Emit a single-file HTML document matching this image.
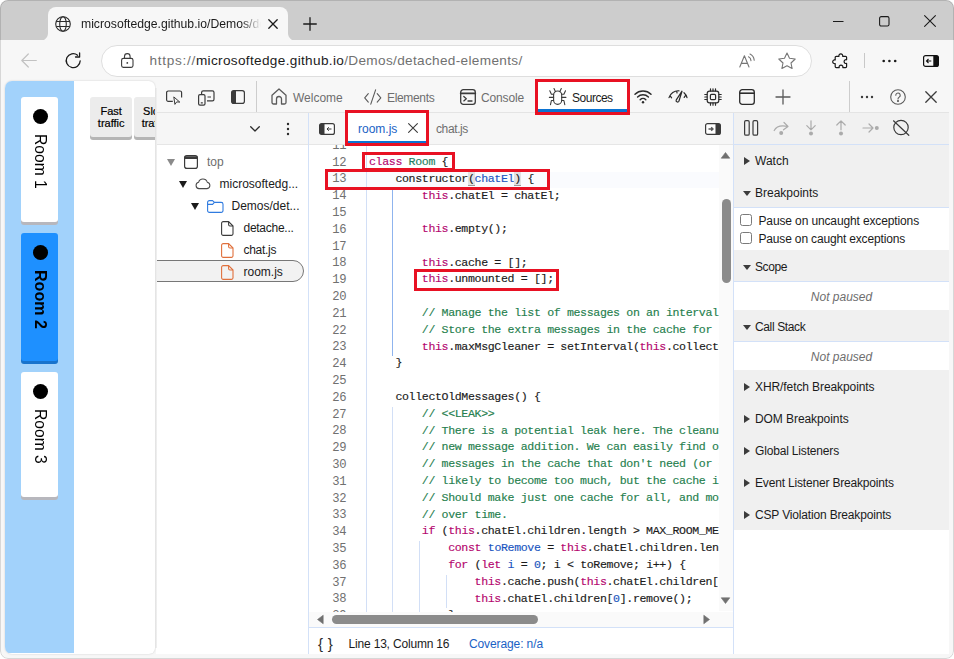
<!DOCTYPE html>
<html lang="en">
<head>
<meta charset="utf-8">
<title>microsoftedge.github.io/Demos/detached-elements/</title>
<style>
*{box-sizing:border-box;margin:0;padding:0}
html,body{width:954px;height:659px;overflow:hidden;background:#fff}
body{position:relative;font-family:"Liberation Sans",sans-serif;font-size:12px;color:#1b1b1b}
.abs,.abs-all *{position:absolute}
#win{position:absolute;left:0;top:0;width:954px;height:659px;background:#f7f7f7;border-radius:8px 8px 8px 8px;overflow:hidden}
#titlebar{position:absolute;left:0;top:0;width:954px;height:41px;background:#cdcdcd}
#tab{position:absolute;left:48px;top:7px;width:240px;height:34px;background:#f7f7f7;border-radius:8px 8px 0 0}
#tab:before,#tab:after{content:"";position:absolute;bottom:0;width:8px;height:8px}
#tab:before{left:-8px;background:radial-gradient(circle at 0 0,rgba(0,0,0,0) 7.5px,#f7f7f7 8.5px)}
#tab:after{right:-8px;background:radial-gradient(circle at 100% 0,rgba(0,0,0,0) 7.5px,#f7f7f7 8.5px)}
.t{position:absolute;white-space:nowrap;line-height:1}
svg{position:absolute;overflow:visible}
#toolbar{position:absolute;left:0;top:40px;width:954px;height:41px;background:#f7f7f7}
#pill{position:absolute;left:101px;top:44.500px;width:711px;height:32.500px;border-radius:16px;background:#fff;border:1px solid #dedede}
#page{position:absolute;left:5px;top:81px;width:150px;height:573px;background:#fff;border-radius:7px 6px 6px 7px;overflow:hidden;box-shadow:0 0 2px rgba(0,0,0,.18)}
#rooms{position:absolute;left:0;top:0;width:69px;height:572px;background:#a2d2fb}
.room{position:absolute;left:16px;width:37px;background:#fff;border-radius:3px;box-shadow:0 3px 0 #b7b7bd}
.room .dot{position:absolute;left:11.5px;top:12px;width:15px;height:15px;border-radius:50%;background:#000}
.room .lbl{position:absolute;left:7px;top:37px;writing-mode:vertical-rl;font-size:17px;line-height:25px;white-space:nowrap;color:#000;transform:scaleY(.918);transform-origin:50% 0}
.btn{-webkit-text-stroke:.2px;position:absolute;top:16px;width:42.4px;height:40px;background:#ececec;border-radius:3px;box-shadow:0 3px 0 #b5b5b5;font-size:11px;line-height:12px;text-align:center;padding-top:8px;color:#000}

#dt{position:absolute;left:156px;top:81px;width:793px;height:573px;background:#fff}
.row1{position:absolute;left:156px;top:81px;width:793px;height:32px;background:#f7f7f7;border-bottom:1px solid #e4e4e4}
.row2{position:absolute;left:156px;top:113px;width:793px;height:32px;background:#f6f6f6;border-bottom:1px solid #e6e6e6}
.vline{position:absolute;width:1px;background:#d3e1f8}
.ui{font-size:12px;color:#1b1b1b}
.grey{color:#6e6e6e}
.redbox{position:absolute;border:3px solid #e81123}
.hdr{position:absolute;left:734px;width:215px;height:32px;background:#f0f0f0}
.hdr .t{left:21px;top:10px;font-size:12px}
.hdr i{position:absolute;width:0;height:0;border-style:solid}
.hdr i.r{left:10px;top:12px;border-width:4px 0 4px 6.5px;border-color:transparent transparent transparent #3c3c3c}
.hdr i.d{left:8.5px;top:13.5px;border-width:5.5px 4px 0 4px;border-color:#3c3c3c transparent transparent transparent}
.lo i{margin-top:1px}
.hl{position:absolute;left:734px;width:215px;height:1px;background:#d3e1f8}
.cb{position:absolute;left:740px;width:12px;height:12px;border:1px solid #7a7a7a;border-radius:2.5px;background:#fff}
.np{position:absolute;left:734px;width:215px;text-align:center;font-style:italic;color:#6e6e6e;font-size:12px;line-height:1;white-space:nowrap}
.tri{position:absolute;width:0;height:0;border-style:solid;border-width:7px 4.5px 0 4.5px;border-color:#1b1b1b transparent transparent transparent}
#code{position:absolute;left:309px;top:145px;width:410px;height:467px;overflow:hidden;background:#fff}
#code pre{-webkit-text-stroke:.15px;position:absolute;left:60px;top:-7.9px;font-family:"Liberation Mono",monospace;font-size:11.6px;letter-spacing:-.36px;line-height:16.8px;color:#1b1b1b;white-space:pre}
#code .ln{position:absolute;left:0;top:-7.2px;width:37px;text-align:right;font-family:"Liberation Mono",monospace;font-size:12.2px;letter-spacing:-.5px;line-height:16.8px;color:#707070;white-space:pre}
.k{color:#b4056e}.ty{color:#1f7f62}.d{color:#1a55c0}.c{color:#26804e}.n{color:#1a55c0}
.bm{background:#e2e2e2;box-shadow:0 1px 0 #9a9a9a}
.g{position:absolute;width:1px;background:#d2dff6}
</style>
</head>
<body>
<div id="win">
  <div id="titlebar"></div>
  <div id="tab"></div>
  <div class="t" style="left:81px;top:18px;font-size:12.2px;color:#1b1b1b;width:180px;height:14px;overflow:hidden;-webkit-mask-image:linear-gradient(90deg,#000 160px,transparent 180px);mask-image:linear-gradient(90deg,#000 160px,transparent 180px)">microsoftedge.github.io/Demos/detached-elements/</div>
  <div id="toolbar"></div>
  <div id="pill"></div>
  <div class="t" style="left:149.500px;top:54px;font-size:13.600px;letter-spacing:.335px;color:#717171"><span style="letter-spacing:.7px">https://</span><span style="color:#1b1b1b">microsoftedge.github.io</span>/Demos/detached-elements/</div>

<!-- browser chrome icons -->
<svg style="left:55px;top:16px" width="16" height="16" viewBox="0 0 16 16" fill="none" stroke="#2b2b2b" stroke-width="1.100"><circle cx="8" cy="8" r="7.300"/><ellipse cx="8" cy="8" rx="3.300" ry="7.300"/><path d="M1.300 5.500H14.700M1.300 10.500H14.700"/></svg>
<svg style="left:268px;top:19px" width="10" height="10" viewBox="0 0 10 10" fill="none" stroke="#1b1b1b" stroke-width="1.300" stroke-linecap="round"><path d="M.8 .8L9.200 9.200M9.200 .8L.8 9.200"/></svg>
<svg style="left:303px;top:17px" width="14" height="14" viewBox="0 0 14 14" fill="none" stroke="#1b1b1b" stroke-width="1.300" stroke-linecap="round"><path d="M7 .7V13.300M.7 7H13.300"/></svg>
<svg style="left:833px;top:20.500px" width="11" height="2" viewBox="0 0 11 2" fill="none" stroke="#1b1b1b" stroke-width="1.100"><path d="M0 .5H10.500"/></svg>
<svg style="left:879px;top:16px" width="11" height="11" viewBox="0 0 11 11" fill="none" stroke="#1b1b1b" stroke-width="1.100"><rect x=".6" y=".6" width="9.400" height="9.400" rx="1.600"/></svg>
<svg style="left:924px;top:15px" width="12" height="12" viewBox="0 0 12 12" fill="none" stroke="#1b1b1b" stroke-width="1.100" stroke-linecap="round"><path d="M.6 .6L11.400 11.400M11.400 .6L.6 11.400"/></svg>
<svg style="left:21px;top:53px" width="16" height="15" viewBox="0 0 16 15" fill="none" stroke="#c2c2c2" stroke-width="1.200" stroke-linecap="round" stroke-linejoin="round"><path d="M15.300 7.500H1M7.300 1L.8 7.500 7.300 14"/></svg>
<svg style="left:65px;top:52px" width="17" height="17" viewBox="0 0 17 17" fill="none" stroke="#1b1b1b" stroke-width="1.300" stroke-linecap="round" stroke-linejoin="round"><path d="M15.200 8.800A7 7 0 1 1 12.600 3.200"/><path d="M14.600 .9V5H10.500" /></svg>
<svg style="left:121px;top:53px" width="13" height="15" viewBox="0 0 13 15" fill="none" stroke="#3b3b3b" stroke-width="1.100"><rect x=".6" y="5.400" width="11.400" height="9" rx="1.800"/><path d="M3.500 5.400V3.400A2.800 2.800 0 0 1 9.100 3.400V5.400"/><circle cx="6.300" cy="9.900" r=".9" fill="#3b3b3b" stroke="none"/></svg>
<svg style="left:739px;top:53px" width="18" height="15" viewBox="0 0 18 15" fill="none" stroke="#767676" stroke-width="1.100" stroke-linecap="round" stroke-linejoin="round"><path d="M.8 14L5.400 2.800 10 14M2.300 10.400H8.500"/><path d="M9.500 3.800A4.500 4.500 0 0 1 12 7.600M11 1A7.600 7.600 0 0 1 15.200 7.200"/></svg>
<svg style="left:778px;top:52px" width="18" height="17" viewBox="0 0 18 17" fill="none" stroke="#767676" stroke-width="1.100" stroke-linejoin="round"><path d="M9 1L11.500 6.200 17.200 7 13 11 14.100 16.500 9 13.800 3.900 16.500 5 11 .8 7 6.500 6.200z"/></svg>
<svg style="left:833px;top:53px" width="16" height="16" viewBox="0 0 16 16" fill="none" stroke="#1b1b1b" stroke-width="1.200" stroke-linejoin="round"><path d="M6 3.300A1.900 1.900 0 1 1 9.600 3.300H12.600A1 1 0 0 1 13.600 4.300V6.800A1.900 1.900 0 1 0 13.600 10.400V13.600A1 1 0 0 1 12.600 14.600H9.800A1.900 1.900 0 1 0 6.200 14.600H3.200A1 1 0 0 1 2.200 13.600V10.600A1.900 1.900 0 1 1 2.200 7V4.300A1 1 0 0 1 3.200 3.300z"/></svg>
<div class="vline" style="left:864px;top:53px;height:15px;background:#c8c8c8"></div>
<svg style="left:882px;top:59px" width="15" height="4" viewBox="0 0 15 4" fill="#1b1b1b"><circle cx="1.700" cy="2" r="1.300"/><circle cx="7.400" cy="2" r="1.300"/><circle cx="13.200" cy="2" r="1.300"/></svg>
<svg style="left:923px;top:55px" width="16" height="12" viewBox="0 0 16 12"><rect x=".6" y=".6" width="14.800" height="10.800" rx="2" fill="none" stroke="#111" stroke-width="1.200"/><path d="M10.300 .6H13.400A2 2 0 0 1 15.400 2.600V9.400A2 2 0 0 1 13.400 11.400H10.300z" fill="#111"/><path d="M8.300 6H3.500M5.500 4L3.500 6l2 2" fill="none" stroke="#111" stroke-width="1.100"/></svg>

  <div id="page">
    <div id="rooms">
      <div class="room" style="top:16px;height:125px"><div class="dot"></div><div class="lbl">Room 1</div></div>
      <div class="room" style="top:152px;height:127.5px;background:#1e90ff;box-shadow:0 3px 0 #1873cc"><div class="dot"></div><div class="lbl" style="font-weight:bold;transform:scaleY(.945)">Room 2</div></div>
      <div class="room" style="top:291px;height:125px"><div class="dot"></div><div class="lbl">Room 3</div></div>
    </div>
    <div class="btn" style="left:85px">Fast<br>traffic</div>
    <div class="btn" style="left:128.800px">Slow<br>traffic</div>
  </div>

  <div id="dt"></div>
  <div class="row1"></div>
  <div class="row2"></div>

<!-- devtools main toolbar -->
<svg style="left:166px;top:90.400px" width="17" height="16" viewBox="0 0 17 16" fill="none" stroke="#3b3b3b" stroke-width="1.200" stroke-linejoin="round"><path d="M6.800 11.400H2.200A1.600 1.600 0 0 1 .6 9.800V2.600A1.600 1.600 0 0 1 2.200 1H14A1.600 1.600 0 0 1 15.600 2.600V7.600"/><path d="M7.800 6.900L8.900 14.400 10.700 11.900 13.800 12.100z" stroke-width="1"/></svg>
<svg style="left:198px;top:89.600px" width="17" height="16" viewBox="0 0 17 16" fill="none" stroke="#3b3b3b" stroke-width="1.2"><path d="M3.600 4V2.400A1.600 1.600 0 0 1 5.200 .8H14.400A1.600 1.600 0 0 1 16 2.400V9.200A1.600 1.600 0 0 1 14.400 10.800H9"/><rect x=".6" y="4.600" width="6.400" height="10.600" rx="1.400"/><path d="M2.800 12.800H4.800M9.500 7H13"/></svg>
<svg style="left:231px;top:90px" width="14" height="14" viewBox="0 0 14 14"><rect x=".6" y=".6" width="12.800" height="12.800" rx="2.200" fill="none" stroke="#3b3b3b" stroke-width="1.200"/><path d="M2.800 .6H5V13.400H2.800A2.200 2.200 0 0 1 .6 11.200V2.800A2.200 2.200 0 0 1 2.800 .6z" fill="#3b3b3b"/></svg>
<div class="vline" style="left:256px;top:81px;height:31px;background:#cdcdcd"></div>
<svg style="left:271px;top:88px" width="16" height="17" viewBox="0 0 16 17" fill="none" stroke="#5a5a5a" stroke-width="1.3" stroke-linejoin="round"><path d="M1 7.200L8 1l7 6.200V14.500a1.500 1.500 0 0 1-1.500 1.500H10.500V11a2.500 2.500 0 0 0-5 0v5H2.500A1.500 1.500 0 0 1 1 14.500z"/></svg>
<div class="t ui grey" style="left:293px;top:92px">Welcome</div>
<svg style="left:364px;top:89px" width="18" height="16" viewBox="0 0 18 16" fill="none" stroke="#5a5a5a" stroke-width="1.100" stroke-linecap="round" stroke-linejoin="round"><path d="M4.300 4.700L.7 8.900 4.300 13.100M13.200 4.700L16.800 8.900 13.200 13.100M11.600 .8L6.800 15.200"/></svg>
<div class="t ui grey" style="letter-spacing:-0.337px;left:387px;top:92px">Elements</div>
<svg style="left:460px;top:89px" width="16" height="16" viewBox="0 0 16 16" fill="none" stroke="#3b3b3b" stroke-width="1.300" stroke-linecap="round" stroke-linejoin="round"><rect x=".7" y=".7" width="14.600" height="14.600" rx="2.600"/><path d="M.7 4.300H15.300" stroke-width="1.8"/><path d="M3.800 7.500L6.300 9.700 3.800 11.900M8 12h4"/></svg>
<div class="t ui grey" style="letter-spacing:-0.157px;left:481px;top:92px">Console</div>
<div style="position:absolute;left:537px;top:81px;width:91px;height:31px;background:#fff"></div>
<svg style="left:549px;top:88px" width="18" height="17" viewBox="0 0 18 17" fill="none" stroke="#3b3b3b" stroke-width="1.100" stroke-linecap="round" stroke-linejoin="round"><path d="M4.600 7a4.050 4.050 0 0 1 8.100 0V12.300a4.050 4.050 0 0 1-8.100 0z"/><path d="M6.400 3.600L5 .6M10.900 3.600L12.300 .6M4.600 6.300H2.400L.8 2.800M12.700 6.300H14.900L16.500 2.800M4.600 9.400H.4M12.700 9.400H16.900M4.600 12.500H2.400L1.500 16.600M12.700 12.500H14.900L15.800 16.600"/></svg>
<div class="t ui" style="letter-spacing:-0.486px;left:572px;top:92px;color:#1b1b1b">Sources</div>
<div style="position:absolute;left:537px;top:109.200px;width:91px;height:2.800px;background:#0b73d2"></div>
<svg style="left:634px;top:89px" width="18" height="15" viewBox="0 0 18 15" fill="none" stroke="#2b2b2b" stroke-width="1.500" stroke-linecap="round"><path d="M1 5.200a11.500 11.500 0 0 1 16 0M3.600 8a7.800 7.800 0 0 1 10.800 0M6.200 10.700a4 4 0 0 1 5.600 0"/><circle cx="9" cy="13.200" r="1.200" fill="#2b2b2b" stroke="none"/></svg>
<svg style="left:668px;top:90px" width="20" height="13" viewBox="0 0 20 13" fill="none" stroke="#2b2b2b" stroke-width="1.200" stroke-linecap="round" stroke-linejoin="round"><path d="M1 7.600A9.500 9.500 0 0 1 11 .8M16 2.700A9.500 9.500 0 0 1 19 7.600M2 5.600L3.600 7.800M17.600 5.200L16.200 7.400M8.800 1L9 3"/><path d="M14 1.200L8.300 9.800A1.500 1.500 0 0 0 10.900 11.300z"/></svg>
<svg style="left:704px;top:88px" width="18" height="18" viewBox="0 0 18 18" fill="none" stroke="#2b2b2b" stroke-width="1.200" stroke-linecap="round"><rect x="3.200" y="3.200" width="11.600" height="11.600" rx="2.400"/><rect x="6.400" y="6.400" width="5.200" height="5.200" rx="1.200"/><path d="M6.500 3V.8M9 3V.8M11.500 3V.8M6.500 17.200V15M9 17.200V15M11.500 17.200V15M3 6.500H.8M3 9H.8M3 11.500H.8M17.200 6.500H15M17.200 9H15M17.200 11.500H15"/></svg>
<svg style="left:739px;top:89px" width="16" height="16" viewBox="0 0 16 16" fill="none" stroke="#2b2b2b" stroke-width="1.300"><rect x=".7" y=".7" width="14.600" height="14.600" rx="2.600"/><path d="M.7 4.200H15.300" stroke-width="1.600"/></svg>
<svg style="left:775px;top:89px" width="16" height="16" viewBox="0 0 16 16" fill="none" stroke="#5a5a5a" stroke-width="1.300" stroke-linecap="round"><path d="M8 1v14M1 8h14"/></svg>
<div class="vline" style="left:849px;top:81px;height:31px;background:#cdcdcd"></div>
<svg style="left:860px;top:95px" width="14" height="4" viewBox="0 0 14 4" fill="#3b3b3b"><circle cx="2" cy="2" r="1.200"/><circle cx="7" cy="2" r="1.200"/><circle cx="12" cy="2" r="1.200"/></svg>
<svg style="left:890px;top:89px" width="16" height="16" viewBox="0 0 16 16" fill="none" stroke="#5a5a5a" stroke-width="1.100" stroke-linecap="round"><circle cx="8" cy="8" r="7.300"/><path d="M5.800 6.300a2.200 2.200 0 1 1 3.400 1.800c-.8.500-1.200 1-1.200 1.900"/><circle cx="8" cy="12" r=".5" fill="#5a5a5a"/></svg>
<svg style="left:925px;top:91px" width="12" height="12" viewBox="0 0 12 12" fill="none" stroke="#3b3b3b" stroke-width="1.300" stroke-linecap="round"><path d="M.8 .8L11.200 11.200M11.200 .8L.8 11.200"/></svg>


<!-- second row -->
<svg style="left:250px;top:125.700px" width="10" height="6" viewBox="0 0 10 6" fill="none" stroke="#2b2b2b" stroke-width="1.300" stroke-linecap="round" stroke-linejoin="round"><path d="M.7 .7L5 5l4.300-4.300"/></svg>
<svg style="left:286px;top:122px" width="4" height="14" viewBox="0 0 4 14" fill="#2b2b2b"><circle cx="2" cy="2" r="1.200"/><circle cx="2" cy="7" r="1.200"/><circle cx="2" cy="12" r="1.200"/></svg>
<div class="vline" style="left:308px;top:113px;height:541px"></div>
<svg style="left:319px;top:123px" width="16" height="12" viewBox="0 0 16 12"><rect x=".6" y=".6" width="14.800" height="10.800" rx="2" fill="#fff" stroke="#3b3b3b" stroke-width="1.200"/><path d="M2.600 .6H5.500V11.400H2.600A2 2 0 0 1 .6 9.400V2.600A2 2 0 0 1 2.600 .6z" fill="#3b3b3b"/><path d="M12.500 6H8M9.800 4.200L8 6l1.800 1.800" fill="none" stroke="#3b3b3b" stroke-width="1"/></svg>
<div class="abs" style="position:absolute;left:348px;top:113px;width:80px;height:31px;background:#fff"></div>
<div class="t ui" style="left:358px;top:123px;color:#1a62c5">room.js</div>
<svg style="left:408px;top:123px" width="10" height="10" viewBox="0 0 10 10" fill="none" stroke="#3b3b3b" stroke-width="1.100" stroke-linecap="round"><path d="M.6 .6L9.400 9.400M9.400 .6L.6 9.400"/></svg>
<div style="position:absolute;left:348px;top:141px;width:80px;height:2px;background:#0b73d2"></div>
<div class="t ui grey" style="letter-spacing:-0.386px;left:436px;top:123px">chat.js</div>
<svg style="left:705px;top:123px" width="16" height="12" viewBox="0 0 16 12"><rect x=".6" y=".6" width="14.800" height="10.800" rx="2" fill="#fff" stroke="#3b3b3b" stroke-width="1.200"/><path d="M13.400 .6H10.500V11.400H13.400A2 2 0 0 0 15.400 9.400V2.600A2 2 0 0 0 13.400 .6z" fill="#3b3b3b"/><path d="M3.500 6H8M6.200 4.200L8 6 6.200 7.800" fill="none" stroke="#5a5a5a" stroke-width="1.400"/></svg>
<div class="vline" style="left:733px;top:113px;height:541px"></div>
<!-- debugger toolbar -->
<div style="position:absolute;left:734px;top:113px;width:215px;height:31px;background:#f1f1f1"></div>
<svg style="left:744px;top:120px" width="15" height="16" viewBox="0 0 15 16" fill="none" stroke="#3b3b3b" stroke-width="1.200"><rect x=".6" y=".6" width="4.600" height="14.600" rx="1.300"/><rect x="9" y=".6" width="4.600" height="14.600" rx="1.300"/></svg>
<svg style="left:773px;top:120px" width="17" height="16" viewBox="0 0 17 16" fill="none" stroke="#ababab" stroke-width="1.200" stroke-linecap="round" stroke-linejoin="round"><path d="M1.200 10.500C3 6.800 8 5 14.500 6.300M11 2.500L15 6.400 10.500 9.800"/><circle cx="8.200" cy="13" r="2" fill="#ababab" stroke="none"/></svg>
<svg style="left:805px;top:120px" width="12" height="16" viewBox="0 0 12 16" fill="none" stroke="#ababab" stroke-width="1.200" stroke-linecap="round" stroke-linejoin="round"><path d="M6 .8V9.800M1.800 5.600L6 9.800l4.200-4.200"/><circle cx="6" cy="13.500" r="2" fill="#ababab" stroke="none"/></svg>
<svg style="left:835px;top:120px" width="12" height="16" viewBox="0 0 12 16" fill="none" stroke="#ababab" stroke-width="1.200" stroke-linecap="round" stroke-linejoin="round"><path d="M6 9.800V.8M1.800 5L6 .8l4.200 4.200"/><circle cx="6" cy="13.500" r="2" fill="#ababab" stroke="none"/></svg>
<svg style="left:862px;top:123px" width="17" height="10" viewBox="0 0 17 10" fill="none" stroke="#ababab" stroke-width="1.200" stroke-linecap="round" stroke-linejoin="round"><path d="M1 5H11M7 1L11 5 7 9"/><circle cx="14.800" cy="5" r="2" fill="#ababab" stroke="none"/></svg>
<svg style="left:892px;top:119px" width="18" height="18" viewBox="0 0 18 18" fill="none" stroke="#3b3b3b" stroke-width="1.200" stroke-linecap="round"><circle cx="9" cy="8.500" r="7.200"/><path d="M1.500 1.800L16.800 16.300"/></svg>
<!-- navigator tree -->
<div style="position:absolute;left:155px;top:88px;width:2px;height:560px;background:linear-gradient(90deg,#e0e0e0,#f2f2f2)"></div>
<div style="position:absolute;left:157px;top:255px;width:151px;height:32px;overflow:hidden"><div style="position:absolute;left:-7px;top:5px;width:154px;height:22px;background:#f2f2f2;border:1px solid #777;border-radius:0 11px 11px 0"></div></div>
<div class="tri" style="left:167px;top:159px;border-top-color:#8a8a8a"></div>
<svg style="left:184px;top:155px" width="14" height="14" viewBox="0 0 14 14" fill="none" stroke="#3b3b3b" stroke-width="1.200"><rect x=".6" y=".6" width="12.800" height="12.800" rx="2.200"/><path d="M.6 2.600H13.400" stroke-width="2.800"/></svg>
<div class="t ui grey" style="left:207px;top:156px">top</div>
<div class="tri" style="left:179px;top:181px"></div>
<svg style="left:195px;top:177.500px" width="16" height="11.300" viewBox="0 0 17 12" fill="none" stroke="#4a4a4a" stroke-width="1.100" stroke-linejoin="round"><path d="M4.200 11.300A3.400 3.400 0 0 1 3.800 4.600 4.800 4.800 0 0 1 13 4.400 3.500 3.500 0 0 1 12.800 11.300z"/></svg>
<div class="t ui" style="left:219.500px;top:178px">microsoftedg...</div>
<div class="tri" style="left:191px;top:203px"></div>
<svg style="left:207px;top:200px" width="17" height="13" viewBox="0 0 17 13" fill="none" stroke="#2f7be0" stroke-width="1.100" stroke-linejoin="round"><path d="M.6 2.400A1.800 1.800 0 0 1 2.400 .6H5.600L7.400 2.400H14.200A1.800 1.800 0 0 1 16 4.200V10.600A1.800 1.800 0 0 1 14.200 12.400H2.400A1.800 1.800 0 0 1 .6 10.600z"/><path d="M.6 4.400H5.600L7.400 2.400"/></svg>
<div class="t ui" style="left:231.500px;top:200px">Demos/det...</div>
<svg style="left:221px;top:221px" width="13" height="15" viewBox="0 0 13 15" fill="none" stroke="#3b3b3b" stroke-width="1.100" stroke-linejoin="round"><path d="M2.200 .6H7.600L12 5V12.800A1.600 1.600 0 0 1 10.400 14.400H2.200A1.600 1.600 0 0 1 .6 12.800V2.200A1.600 1.600 0 0 1 2.200 .6z"/><path d="M7.600 .6V3.600A1.400 1.400 0 0 0 9 5H12"/></svg>
<div class="t ui" style="letter-spacing:-0.270px;left:243.500px;top:222px">detache...</div>
<svg style="left:221px;top:243px" width="13" height="15" viewBox="0 0 13 15" fill="none" stroke="#e0703c" stroke-width="1.100" stroke-linejoin="round"><path d="M2.200 .6H7.600L12 5V12.800A1.600 1.600 0 0 1 10.400 14.400H2.200A1.600 1.600 0 0 1 .6 12.800V2.200A1.600 1.600 0 0 1 2.200 .6z"/><path d="M7.600 .6V3.600A1.400 1.400 0 0 0 9 5H12"/></svg>
<div class="t ui" style="left:243.500px;top:244px;letter-spacing:-.3px">chat.js</div>
<svg style="left:221px;top:265px" width="13" height="15" viewBox="0 0 13 15" fill="none" stroke="#e0703c" stroke-width="1.100" stroke-linejoin="round"><path d="M2.200 .6H7.600L12 5V12.800A1.600 1.600 0 0 1 10.400 14.400H2.200A1.600 1.600 0 0 1 .6 12.800V2.200A1.600 1.600 0 0 1 2.200 .6z"/><path d="M7.600 .6V3.600A1.400 1.400 0 0 0 9 5H12"/></svg>
<div class="t ui" style="left:243.500px;top:266px">room.js</div>

<div id="code">
<div class="abs" style="position:absolute;left:16px;top:26.6px;width:394px;height:16.8px;background:#fafbfe"></div>
<div class="g" style="left:57.4px;top:-8.0px;height:487.2px"></div>
<div class="g" style="left:83.4px;top:43.4px;height:168.0px;background:#8fb4ee"></div>
<div class="g" style="left:83.4px;top:261.8px;height:218.4px"></div>
<div class="g" style="left:110.2px;top:396.2px;height:84.0px"></div>
<div class="g" style="left:136.6px;top:429.8px;height:33.6px"></div>
<div class="ln">11
12
13
14
15
16
17
18
19
20
21
22
23
24
25
26
27
28
29
30
31
32
33
34
35
36
37
38
39</div>
<pre> 
<span class="k">class</span> <span class="ty">Room</span> {
    constructor<span class="bm">(</span><span class="d">chatEl</span><span class="bm">)</span> {
        <span class="k">this</span>.chatEl = chatEl;

        <span class="k">this</span>.empty();

        <span class="k">this</span>.cache = [];
        <span class="k">this</span>.unmounted = [];

        <span class="c">// Manage the list of messages on an interval, to keep</span>
        <span class="c">// Store the extra messages in the cache for later</span>
        <span class="k">this</span>.maxMsgCleaner = setInterval(<span class="k">this</span>.collectOldMessages.bind(<span class="k">this</span>), 1000);
    }

    collectOldMessages() {
        <span class="c">// &lt;&lt;LEAK&gt;&gt;</span>
        <span class="c">// There is a potential leak here. The cleanup occurs at a different rate than</span>
        <span class="c">// new message addition. We can easily find ourselves in a situation with</span>
        <span class="c">// messages in the cache that don't need (or can't) be displayed. This is</span>
        <span class="c">// likely to become too much, but the cache is per room.</span>
        <span class="c">// Should make just one cache for all, and move old messages out</span>
        <span class="c">// over time.</span>
        <span class="k">if</span> (<span class="k">this</span>.chatEl.children.length &gt; MAX_ROOM_MESSAGES) {
            <span class="k">const</span> <span class="d">toRemove</span> = <span class="k">this</span>.chatEl.children.length - MAX_ROOM_MESSAGES;
            <span class="k">for</span> (<span class="k">let</span> <span class="d">i</span> = <span class="n">0</span>; i &lt; toRemove; i++) {
                <span class="k">this</span>.cache.push(<span class="k">this</span>.chatEl.children[<span class="n">0</span>]);
                <span class="k">this</span>.chatEl.children[<span class="n">0</span>].remove();
            }</pre>
</div>


<!-- debugger sidebar -->
<div class="hl" style="top:144px"></div>
<div class="hdr" style="top:145px;height:32px"><i class="r"></i><div class="t">Watch</div></div>
<div class="hdr" style="top:177px;height:30px"><i class="d"></i><div class="t">Breakpoints</div></div>
<div class="hl" style="top:207px"></div>
<div class="cb" style="top:213.800px"></div><div class="t ui" style="letter-spacing:-0.129px;left:758.500px;top:215px">Pause on uncaught exceptions</div>
<div class="cb" style="top:231.800px"></div><div class="t ui" style="letter-spacing:-0.165px;left:758.500px;top:233px">Pause on caught exceptions</div>
<div class="hdr lo" style="top:250px;height:31px"><i class="d"></i><div class="t" style="letter-spacing:-0.400px;top:11px">Scope</div></div>
<div class="hl" style="top:281px"></div>
<div class="np" style="top:291px">Not paused</div>
<div class="hdr lo" style="top:310px;height:31px"><i class="d"></i><div class="t" style="letter-spacing:-0.370px;top:11px">Call Stack</div></div>
<div class="hl" style="top:341px"></div>
<div class="np" style="top:351px">Not paused</div>
<div class="hdr lo" style="top:370px"><i class="r"></i><div class="t" style="letter-spacing:-0.090px;top:11px">XHR/fetch Breakpoints</div></div>
<div class="hdr lo" style="top:402px"><i class="r"></i><div class="t" style="letter-spacing:-0.073px;top:11px">DOM Breakpoints</div></div>
<div class="hdr lo" style="top:434px"><i class="r"></i><div class="t" style="letter-spacing:-0.169px;top:11px">Global Listeners</div></div>
<div class="hdr lo" style="top:466px"><i class="r"></i><div class="t" style="letter-spacing:-0.177px;top:11px">Event Listener Breakpoints</div></div>
<div class="hdr lo" style="top:498px"><i class="r"></i><div class="t" style="letter-spacing:-0.164px;top:11px">CSP Violation Breakpoints</div></div>
<!-- editor scrollbars + status -->
<div class="abs" style="position:absolute;left:719px;top:145px;width:14px;height:466px;background:#fafafa"></div>
<svg style="left:721px;top:152px" width="9" height="7" viewBox="0 0 9 7" fill="#707070"><path d="M4.500 .5L8.800 6.200H.2z" stroke="#707070" stroke-width=".6" stroke-linejoin="round"/></svg>
<div class="abs" style="position:absolute;left:721.500px;top:199px;width:9px;height:83.500px;border-radius:4.500px;background:#8b8b8b"></div>
<svg style="left:721px;top:597px" width="9" height="7" viewBox="0 0 9 7" fill="#707070"><path d="M4.500 6.500L8.800 .8H.2z" stroke="#707070" stroke-width=".6" stroke-linejoin="round"/></svg>
<div class="abs" style="position:absolute;left:309px;top:612px;width:424px;height:15px;background:#fafafa"></div>
<svg style="left:317px;top:615px" width="7" height="9" viewBox="0 0 7 9" fill="#707070"><path d="M.5 4.500L6.200 .2V8.800z" stroke="#707070" stroke-width=".6" stroke-linejoin="round"/></svg>
<div class="abs" style="position:absolute;left:332px;top:615px;width:206px;height:9px;border-radius:4.500px;background:#8b8b8b"></div>
<svg style="left:703px;top:615px" width="7" height="9" viewBox="0 0 7 9" fill="#707070"><path d="M6.500 4.500L.8 .2V8.800z" stroke="#707070" stroke-width=".6" stroke-linejoin="round"/></svg>
<div class="abs" style="position:absolute;left:309px;top:627px;width:424px;height:1px;background:#d3e1f8"></div>
<div class="t" style="left:318px;top:636px;font-size:15px;color:#2b2b2b;letter-spacing:4.800px">{}</div>
<div class="t ui" style="letter-spacing:-0.178px;left:348.500px;top:638px">Line 13, Column 16</div>
<div class="t" style="letter-spacing:-0.108px;left:469px;top:638px;font-size:12px;color:#1a62c5">Coverage: n/a</div>


<div style="position:absolute;left:0;top:0;width:954px;height:659px;border-radius:8px;border:1px solid rgba(0,0,0,.13);pointer-events:none"></div>
<!-- annotation boxes -->
<div class="redbox" style="left:535px;top:79px;width:95px;height:36px"></div>
<div class="redbox" style="left:345px;top:110px;width:84px;height:36px"></div>
<div class="redbox" style="left:361.500px;top:152px;width:93.500px;height:19px"></div>
<div class="redbox" style="left:324.500px;top:169px;width:225.500px;height:20.600px"></div>
<div class="redbox" style="left:413.700px;top:269.200px;width:145.300px;height:21.500px"></div>

</div>
</body>
</html>
